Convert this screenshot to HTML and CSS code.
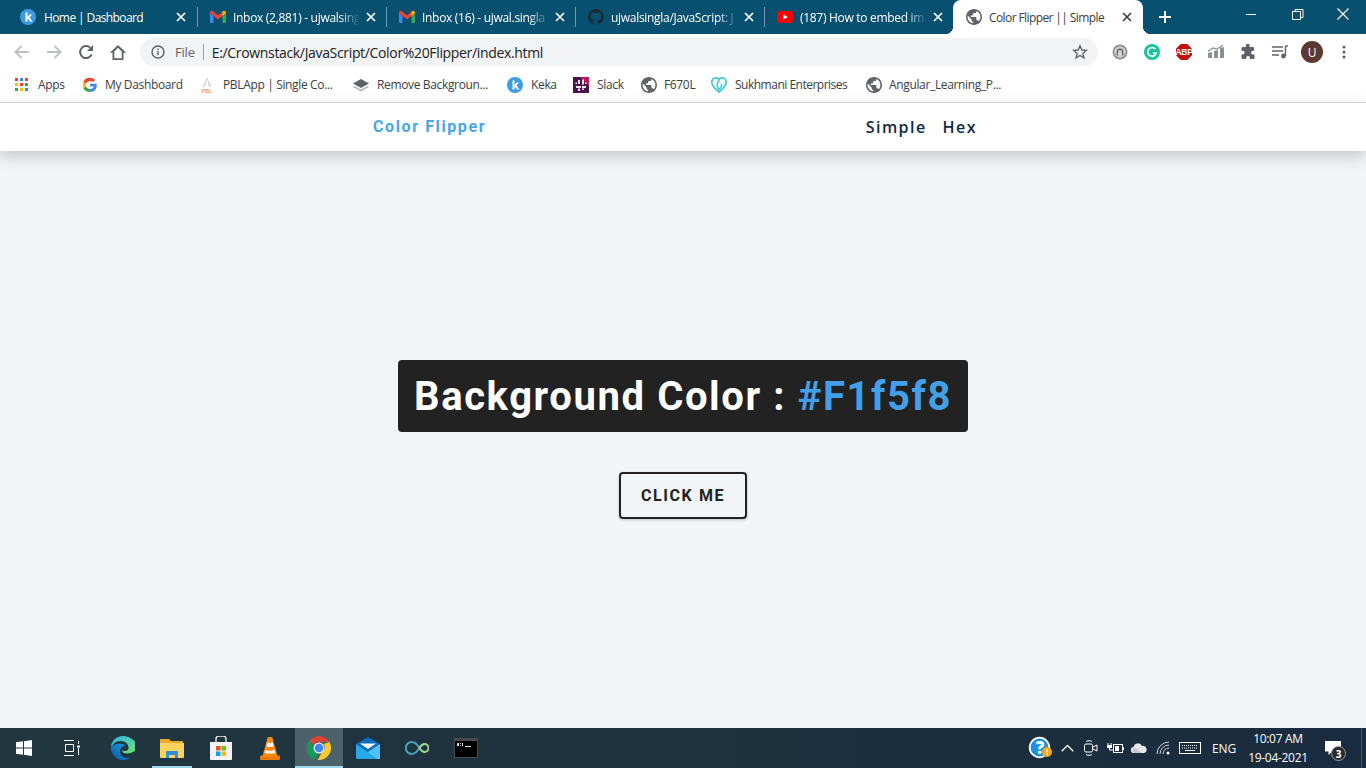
FILE: index.html
```html
<!DOCTYPE html>
<html lang="en">

<head>
    <meta charset="UTF-8">
    <meta name="viewport" content="width=device-width, initial-scale=1.0">
    <title>Color Flipper || Simple</title>
    <link rel="stylesheet" href="styles.css">
</head>

<body>
    <svg class="defs" width="0" height="0">
        <symbol id="globe" viewBox="2 2 20 20">
            <path d="M12 2C6.480 2 2 6.480 2 12s4.480 10 10 10 10-4.480 10-10S17.520 2 12 2zm-1 17.930c-3.950-.490-7-3.850-7-7.930 0-.620.080-1.210.210-1.790L9 15v1c0 1.100.9 2 2 2v1.930zm6.900-2.540c-.260-.810-1-1.390-1.900-1.390h-1v-3c0-.550-.450-1-1-1H8v-2h2c.550 0 1-.450 1-1V7h2c1.100 0 2-.9 2-2v-.410c2.930 1.190 5 4.060 5 7.410 0 2.080-.8 3.970-2.100 5.390z" fill="#5f6368" fill-rule="evenodd" />
        </symbol>
        <symbol id="gmail" viewBox="0 0 16 12">
            <path d="M0 2v9a1 1 0 0 0 1 1h2.500V5z" fill="#4285f4" />
            <path d="M12.500 5v7H15a1 1 0 0 0 1-1V2z" fill="#34a853" />
            <path d="M0 2c0-2 2-2.500 3.300-1.500L8 4.200 12.700.5C14-.5 16 0 16 2l-3.500 3L8 8.500 3.500 5z" fill="#ea4335" />
            <path d="M12.500 5 16 2c0-2-2-2.500-3.300-1.500L12.500 1z" fill="#fbbc04" />
        </symbol>
        <symbol id="keka" viewBox="0 0 16 16">
            <circle cx="8" cy="8" r="8" fill="#3d9be0" />
            <path d="M5.500 3.500h2V8l2.300-2.500h2.400L9.500 8.300l2.900 4.200H10L8.200 9.800l-.7.700v2h-2z" fill="#fff" />
        </symbol>
        <symbol id="close" viewBox="0 0 10 10">
            <path d="M1 1l8 8M9 1l-8 8" fill="none" stroke="currentColor" stroke-width="1.700" />
        </symbol>
    </svg>

    <div class="tabstrip">
        <div class="tab first">
            <svg class="favicon" width="16" height="16"><use href="#keka" /></svg>
            <span class="tab-title">Home | Dashboard</span>
            <svg class="tab-close" width="10" height="10"><use href="#close" /></svg>
        </div>
        <div class="tab">
            <svg class="favicon" width="16" height="12"><use href="#gmail" /></svg>
            <span class="tab-title fade">Inbox (2,881) - ujwalsing</span>
            <svg class="tab-close" width="10" height="10"><use href="#close" /></svg>
        </div>
        <div class="tab">
            <svg class="favicon" width="16" height="12"><use href="#gmail" /></svg>
            <span class="tab-title fade">Inbox (16) - ujwal.singla</span>
            <svg class="tab-close" width="10" height="10"><use href="#close" /></svg>
        </div>
        <div class="tab">
            <svg class="favicon" width="16" height="16" viewBox="0 0 16 16">
                <path d="M8 0a8 8 0 0 0-2.500 15.600c.4.100.5-.2.500-.4v-1.400c-2.200.5-2.700-1-2.700-1-.4-.9-.9-1.200-.9-1.200-.7-.5.100-.5.100-.5.800.1 1.200.8 1.200.8.700 1.200 1.900.9 2.300.7.100-.5.300-.9.500-1.100-1.800-.2-3.600-.9-3.600-4 0-.9.300-1.600.8-2.100-.1-.2-.4-1 .1-2.100 0 0 .7-.2 2.200.8a7.600 7.600 0 0 1 4 0c1.500-1 2.200-.8 2.200-.8.500 1.100.2 1.900.1 2.100.5.600.8 1.300.8 2.100 0 3.100-1.900 3.700-3.700 3.900.3.300.6.800.6 1.500v2.200c0 .2.100.5.600.4A8 8 0 0 0 8 0z" fill="#1b2a33" />
            </svg>
            <span class="tab-title fade">ujwalsingla/JavaScript: J</span>
            <svg class="tab-close" width="10" height="10"><use href="#close" /></svg>
        </div>
        <div class="tab">
            <svg class="favicon" width="16" height="12" viewBox="0 0 16 12">
                <rect width="16" height="12" rx="3" fill="#f00" />
                <path d="M6.400 3.400 10.800 6l-4.400 2.600z" fill="#fff" />
            </svg>
            <span class="tab-title fade">(187) How to embed im</span>
            <svg class="tab-close" width="10" height="10"><use href="#close" /></svg>
        </div>
        <div class="tab active">
            <svg class="favicon" width="16" height="16"><use href="#globe" /></svg>
            <span class="tab-title">Color Flipper || Simple</span>
            <svg class="tab-close" width="10" height="10"><use href="#close" /></svg>
        </div>
        <svg class="new-tab" width="14" height="14" viewBox="0 0 14 14">
            <path d="M7 1v12M1 7h12" fill="none" stroke="#fff" stroke-width="2" />
        </svg>
        <div class="window-controls">
            <svg width="46" height="34" viewBox="0 0 46 34"><path d="M18 14.500h10" stroke="#fff" fill="none" /></svg>
            <svg width="46" height="34" viewBox="0 0 46 34"><path d="M18.500 11.500h8v8h-8zM21 11.500V9.500h8v8h-2.500" stroke="#fff" fill="none" /></svg>
            <svg width="46" height="34" viewBox="0 0 46 34"><path d="M17.500 8.500l11 11M28.500 8.500l-11 11" stroke="#fff" fill="none" stroke-width="1.100" /></svg>
        </div>
    </div>

    <div class="toolbar">
        <div class="tool">
            <svg width="16" height="14" viewBox="0 0 16 14"><path d="M15 7H2M7.500 1 1.500 7l6 6" fill="none" stroke="#bdc1c6" stroke-width="2" /></svg>
        </div>
        <div class="tool">
            <svg width="16" height="14" viewBox="0 0 16 14"><path d="M1 7h13M8.500 1l6 6-6 6" fill="none" stroke="#bdc1c6" stroke-width="2" /></svg>
        </div>
        <div class="tool">
            <svg width="16" height="16" viewBox="0 0 16 16"><path d="M13.600 10.500A6 6 0 1 1 12.200 3.700" fill="none" stroke="#5f6368" stroke-width="2" /><path d="M15 1v6H9z" fill="#5f6368" /></svg>
        </div>
        <div class="tool">
            <svg width="18" height="17" viewBox="0 0 18 17"><path d="M9 1 .8 8.800h2.700V16h11V8.800h2.700zM5.300 14.300V7.500L9 3.800l3.700 3.700v6.800z" fill="#5f6368" fill-rule="evenodd" /></svg>
        </div>
        <div class="omnibox">
            <svg class="info" width="14" height="14" viewBox="0 0 14 14"><circle cx="7" cy="7" r="6" fill="none" stroke="#5f6368" stroke-width="1.400" /><path d="M6.300 6h1.400v4.300H6.300zM6.300 3.500h1.400v1.400H6.300z" fill="#5f6368" /></svg>
            <span class="scheme">File</span>
            <span class="omni-sep"></span>
            <span class="url">E:/Crownstack/JavaScript/Color%20Flipper/index.html</span>
            <svg class="star" width="16" height="16" viewBox="0 0 16 16"><path d="M8 1.800 9.800 6l4.500.4-3.400 3 1 4.400L8 11.500l-3.900 2.300 1-4.400-3.400-3L6.200 6z" fill="none" stroke="#5f6368" stroke-width="1.400" /></svg>
        </div>
        <div class="tool">
            <svg width="16" height="16" viewBox="0 0 16 16"><circle cx="8" cy="8" r="7.500" fill="#8e8e8e" /><circle cx="8" cy="8" r="5.800" fill="#cfcfcf" /><path d="M4.600 11.500V8a3.400 3.400 0 0 1 6.800 0v3.500H10V8a2 2 0 0 0-4 0v3.500z" fill="#6a6a6a" /></svg>
        </div>
        <div class="tool">
            <svg width="16" height="16" viewBox="0 0 16 16"><circle cx="8" cy="8" r="8" fill="#15c39a" /><path d="M11.300 5.200A4.300 4.300 0 1 0 12.200 9H8.800" fill="none" stroke="#fff" stroke-width="1.700" /></svg>
        </div>
        <div class="tool">
            <div class="abp">ABP</div>
        </div>
        <div class="tool">
            <svg width="16" height="14" viewBox="0 0 16 14"><path d="M0 8l4-1v6H0zM6 6l4-1v8H6zM12 3l4-1v11h-4z" fill="#8a8f94" /><path d="M0 6.500 5 3l4 1 6-4" fill="none" stroke="#8a8f94" stroke-width="1.200" /></svg>
        </div>
        <div class="tool">
            <svg width="16" height="16" viewBox="0 0 16 16"><path d="M6 1.500a1.800 1.800 0 0 1 3.600 0V3H13a1 1 0 0 1 1 1v2.800h-1a1.900 1.900 0 0 0 0 3.800h1.500V14a1 1 0 0 1-1 1H10v-1.200a1.900 1.900 0 0 0-3.800 0V15H2.500a1 1 0 0 1-1-1v-3.500h1.200a1.900 1.900 0 0 0 0-3.800H1.500V4a1 1 0 0 1 1-1H6z" fill="#5f6368" /></svg>
        </div>
        <div class="tool">
            <svg width="16" height="14" viewBox="0 0 16 14"><path d="M0 2h11M0 6h11M0 10h7" stroke="#5f6368" stroke-width="1.400" fill="none" /><path d="M13.500 1v10" stroke="#5f6368" stroke-width="1.400" fill="none" /><path d="M13.500 1H16" stroke="#5f6368" stroke-width="1.400" fill="none" /><circle cx="11.500" cy="11" r="2.400" fill="#5f6368" /></svg>
        </div>
        <div class="tool">
            <div class="avatar">U</div>
        </div>
        <div class="tool">
            <svg width="4" height="14" viewBox="0 0 4 14"><circle cx="2" cy="2" r="1.500" fill="#5f6368" /><circle cx="2" cy="7" r="1.500" fill="#5f6368" /><circle cx="2" cy="12" r="1.500" fill="#5f6368" /></svg>
        </div>
    </div>

    <div class="bookmarks">
        <div class="mark apps">
            <svg width="14" height="14" viewBox="0 0 14 14">
                <path d="M0 0h3v3H0z" fill="#ea4335" /><path d="M5 0h3v3H5z" fill="#4285f4" /><path d="M10 0h3v3h-3z" fill="#ea4335" />
                <path d="M0 5h3v3H0z" fill="#fbbc04" /><path d="M5 5h3v3H5z" fill="#ea4335" /><path d="M10 5h3v3h-3z" fill="#34a853" />
                <path d="M0 10h3v3H0z" fill="#34a853" /><path d="M5 10h3v3H5z" fill="#fbbc04" /><path d="M10 10h3v3h-3z" fill="#4285f4" />
            </svg>
            <span>Apps</span>
        </div>
        <div class="mark dash">
            <svg width="14" height="14" viewBox="0 0 14 14">
                <path d="M13.700 5.800H7.100v2.700h3.800c-.4 1.600-1.800 2.500-3.800 2.500V14c2.200 0 3.900-.7 5.100-2 1.200-1.300 1.700-3.200 1.500-6.200z" fill="#4285f4" />
                <path d="M3 8.300.4 10.400C1.700 12.600 4.200 14 7.100 14v-3c-1.900 0-3.500-1.200-4.100-2.700z" fill="#34a853" />
                <path d="M3 5.700.4 3.600a7 7 0 0 0 0 6.800L3 8.300a4 4 0 0 1 0-2.600z" fill="#fbbc04" />
                <path d="M7.100 3c1.100 0 2 .4 2.800 1.100l2.100-2.100A7 7 0 0 0 .4 3.600L3 5.700C3.600 4.200 5.200 3 7.100 3z" fill="#ea4335" />
            </svg>
            <span>My Dashboard</span>
        </div>
        <div class="mark pbl">
            <svg width="14" height="16" viewBox="0 0 14 16">
                <path d="M7 0 2 10h3L7 3l2 7h3z" fill="#dcdcdc" />
                <text class="pbl-mark" x="7" y="15.500">PBL</text>
            </svg>
            <span>PBLApp | Single Co...</span>
        </div>
        <div class="mark removebg">
            <svg width="16" height="14" viewBox="0 0 16 14">
                <path d="M8 1l8 4.500L8 10 0 5.500z" fill="#5f6368" />
                <path d="M1.500 8 8 11.500 14.500 8 16 9l-8 4.500L0 9z" fill="#b5b8bb" />
            </svg>
            <span>Remove Backgroun...</span>
        </div>
        <div class="mark keka">
            <svg width="16" height="16"><use href="#keka" /></svg>
            <span>Keka</span>
        </div>
        <div class="mark slack">
            <svg width="16" height="16" viewBox="0 0 16 16">
                <rect width="16" height="16" fill="#4a154b" />
                <path d="M7 0h9v9z" fill="#c2185b" />
                <path d="M5 3h2v4H5zM9 2.500h2v5H9zM3 9h5v2H3zM9 9h4v2H9zM5 11.500h2V14H5zM9 11.500h2V13H9zM2.500 5.500H4V7H2.500zM12 5.500h1.500V7H12z" fill="#f2e3ea" />
            </svg>
            <span>Slack</span>
        </div>
        <div class="mark f670">
            <svg width="16" height="16"><use href="#globe" /></svg>
            <span>F670L</span>
        </div>
        <div class="mark sukh">
            <svg width="16" height="16" viewBox="0 0 16 16">
                <path d="M8 2.500C6.500 0 2 .5 1 3.500c-1 3.200 2.500 8 7 11.500 4.500-3.500 8-8.300 7-11.500C14 .5 9.500 0 8 2.500z" fill="none" stroke="#4cc9c9" stroke-width="1.800" />
                <path d="M8 3C6 6 5.500 10 8 12.500c2-1.500 3-3.500 2.500-5.500" fill="none" stroke="#4cc9c9" stroke-width="1.600" />
            </svg>
            <span>Sukhmani Enterprises</span>
        </div>
        <div class="mark angular">
            <svg width="16" height="16"><use href="#globe" /></svg>
            <span>Angular_Learning_P...</span>
        </div>
    </div>

    <nav class="nav">
        <h4 class="logo">Color Flipper</h4>
        <ul class="nav-links">
            <li>Simple</li>
            <li>Hex</li>
        </ul>
    </nav>

    <main class="page">
        <h2 class="color-title">Background Color : <span class="color-value">#F1f5f8</span></h2>
        <button class="flip-btn">CLICK ME</button>
    </main>

    <footer class="taskbar">
        <div class="task start">
            <svg width="16" height="16" viewBox="0 0 16 16"><path d="M0 2.300 7 1.300v6.300H0zM8 1.200 16 0v7.600H8zM0 8.500h7v6.300l-7-1zM8 8.500h8V16l-8-1.200z" fill="#fff" /></svg>
        </div>
        <div class="task">
            <svg width="16" height="16" viewBox="0 0 16 16"><path d="M0 .5h10M0 15.500h10M1.500 4.500h8v7h-8zM14.500 1v3M14.500 8v7" stroke="#fff" fill="none" /><path d="M13 5.500h3v2h-3z" fill="#fff" /></svg>
        </div>
        <div class="task-apps">
            <div class="task">
                <svg width="24" height="24" viewBox="0 0 24 24">
                    <defs>
                        <linearGradient id="edgeA" x1="0" y1="1" x2="1" y2="0"><stop offset="0" stop-color="#0c59a4" /><stop offset="1" stop-color="#1b9de2" /></linearGradient>
                        <linearGradient id="edgeB" x1="0" y1="0" x2="1" y2="1"><stop offset="0" stop-color="#2fb3ec" /><stop offset="1" stop-color="#6fe36a" /></linearGradient>
                    </defs>
                    <path d="M12 0C5 0 .5 5 0 11c2-4 5.500-6 9-6 5 0 9 3 8.500 7.500-.2 1.500-1.500 2.500-3.500 2.500-2 0-3-.5-3-.5 0 2 2 3 5 3 4 0 10-2.500 10-6.500C26 5 18.500 0 12 0z" fill="url(#edgeB)" />
                    <path d="M0 11c-.3 7 5 13 12 13 3 0 5.500-1 7.500-2.500-5 1.500-10.500-1-10.500-6 0-3 2.500-5.500 5.500-6.500C10 7 1.500 7 0 11z" fill="url(#edgeA)" />
                </svg>
            </div>
            <div class="task running">
                <svg width="24" height="20" viewBox="0 0 24 20">
                    <path d="M0 1h9l2 2h12v2H0z" fill="#e8a92c" />
                    <path d="M0 5h24v14a1 1 0 0 1-1 1H1a1 1 0 0 1-1-1z" fill="#fbd35e" />
                    <path d="M6 20v-6a1 1 0 0 1 1-1h10a1 1 0 0 1 1 1v6h-3v-3H9v3z" fill="#2d8fd5" />
                </svg>
            </div>
            <div class="task">
                <svg width="24" height="24" viewBox="0 0 24 24">
                    <path d="M7 6V3a3 3 0 0 1 3-3h4a3 3 0 0 1 3 3v3" fill="none" stroke="#e6e6e6" stroke-width="1.400" />
                    <path d="M1 6h22v17a1 1 0 0 1-1 1H2a1 1 0 0 1-1-1z" fill="#f4f4f4" />
                    <path d="M7 10h4.500v4.500H7z" fill="#f25022" /><path d="M12.500 10H17v4.500h-4.500z" fill="#7fba00" />
                    <path d="M7 15.500h4.500V20H7z" fill="#00a4ef" /><path d="M12.500 15.500H17V20h-4.500z" fill="#ffb900" />
                </svg>
            </div>
            <div class="task">
                <svg width="20" height="24" viewBox="0 0 20 24">
                    <path d="M1 19.500h18a1 1 0 0 1 1 1V23a1 1 0 0 1-1 1H1a1 1 0 0 1-1-1v-2.500a1 1 0 0 1 1-1z" fill="#e8790c" />
                    <path d="M7.800 1h4.400l5.300 19c-2 1.500-13 1.500-15 0z" fill="#f58a0b" />
                    <path d="M7.300 6.500c1.500.5 4 .5 5.400 0l1 4c-2 .8-5.400.8-7.400 0zM5.300 14c2.500 1 7 1 9.400 0l.7 2.800c-3 1.200-8 1.200-11 0z" fill="#f4f4f4" />
                </svg>
            </div>
            <div class="task active">
                <svg width="24" height="24" viewBox="0 0 24 24">
                    <path d="M12 0a12 12 0 0 1 10.400 6H12a6 6 0 0 0-5.600 3.800L2.600 4.500A12 12 0 0 1 12 0z" fill="#db4437" />
                    <path d="M2.600 4.500l4.800 8.300a5 5 0 0 0 3.200 5l-3 6A12 12 0 0 1 2.600 4.500z" fill="#0f9d58" />
                    <path d="M22.400 6A12 12 0 0 1 10.600 23.900L15.800 15A5 5 0 0 0 16.800 8z" fill="#fcc934" />
                    <circle cx="12" cy="12" r="5.500" fill="#f1f3f4" />
                    <circle cx="12" cy="12" r="4.300" fill="#4285f4" />
                </svg>
            </div>
            <div class="task">
                <svg width="24" height="22" viewBox="0 0 24 22">
                    <path d="M0 7 12 0l12 7-12 8z" fill="#0f6cbd" />
                    <path d="M4 6.500h16L12 12z" fill="#f2f9fe" />
                    <path d="M0 7l12 8 12-8v14a1 1 0 0 1-1 1H1a1 1 0 0 1-1-1z" fill="#28a8ea" />
                    <path d="M24 7v14a1 1 0 0 1-1 1h-2L12 15z" fill="#50c3f2" />
                </svg>
            </div>
            <div class="task">
                <svg width="24" height="14" viewBox="0 0 24 14">
                    <path d="M14.500 7C12 3 10 1 6.800 1a6 6 0 0 0 0 12C10 13 12 11 14.500 7z" fill="none" stroke="#46a6b8" stroke-width="2" />
                    <path d="M14.500 7C16 4.500 17.500 3 19.500 3a4 4 0 0 1 0 8c-2 0-3.500-1.500-5-4z" fill="none" stroke="#a5d68f" stroke-width="2" />
                </svg>
            </div>
            <div class="task">
                <svg width="24" height="20" viewBox="0 0 24 20">
                    <rect width="24" height="20" fill="#4a4a4a" />
                    <rect x="1" y="3" width="22" height="16" fill="#000" />
                    <path d="M3 5h2v3H3zM6 5h1v1H6zM6 7h1v1H6zM8 5h1v3H8zM11 8h6v1h-6z" fill="#ddd" />
                </svg>
            </div>
        </div>

        <div class="tray">
            <div class="tray-item help">
                <svg width="24" height="24" viewBox="0 0 24 24">
                    <circle cx="11.500" cy="11.500" r="9.800" fill="#1a8fe3" stroke="#fff" stroke-width="1.800" />
                    <circle cx="19" cy="16" r="5" fill="#f5a623" />
                    <path d="M18.400 13h1.300v3.800h-1.300zM18.400 17.600h1.300v1.300h-1.300z" fill="#fff" />
                </svg>
                <span class="help-mark">?</span>
            </div>
            <div class="tray-item">
                <svg width="13" height="8" viewBox="0 0 13 8"><path d="M.7 7.300 6.500 1.500l5.800 5.800" fill="none" stroke="#fff" stroke-width="1.300" /></svg>
            </div>
            <div class="tray-item">
                <svg width="14" height="16" viewBox="0 0 14 16"><path d="M2 1.500c1-1 5-1 6 0M2 14.500c1 1 5 1 6 0" fill="none" stroke="#fff" /><rect x=".5" y="4" width="8" height="8" rx="1.500" fill="none" stroke="#fff" /><path d="M9 7l4-2v6L9 9" fill="none" stroke="#fff" /></svg>
            </div>
            <div class="tray-item">
                <svg width="17" height="11" viewBox="0 0 17 11"><path d="M1 0v2M4 0v2" stroke="#fff" fill="none" /><path d="M0 2h5v3H0z" fill="#fff" /><path d="M2.500 5v2H6" stroke="#fff" fill="none" /><rect x="6.500" y="1.500" width="9" height="8" fill="none" stroke="#fff" /><path d="M8 3h4v5H8z" fill="#fff" /><path d="M16 4h1v3h-1z" fill="#fff" /></svg>
            </div>
            <div class="tray-item">
                <svg width="16" height="10" viewBox="0 0 16 10"><path d="M3 10a3 3 0 0 1-.5-6A4.500 4.500 0 0 1 11 3a3.500 3.500 0 0 1 2 7z" fill="#e8e8e8" /><path d="M3 10a3 3 0 0 1 0-5c2 0 5 3 8 5z" fill="#c4c8cc" /></svg>
            </div>
            <div class="tray-item">
                <svg width="15" height="14" viewBox="0 0 15 14"><path d="M1 13A12 12 0 0 1 13 1M4 13A9 9 0 0 1 13 4M7 13a6 6 0 0 1 6-6" fill="none" stroke="#cfd3d6" /><circle cx="12" cy="12" r="1.500" fill="#fff" /></svg>
            </div>
            <div class="tray-item keyboard">
                <svg width="22" height="12" viewBox="0 0 22 12"><rect x=".5" y=".5" width="21" height="11" fill="none" stroke="#fff" /><path d="M3 3.500h16M3 6h16" stroke="#fff" stroke-dasharray="1 1" fill="none" /><path d="M6 8.500h10" stroke="#fff" fill="none" /></svg>
            </div>
            <div class="tray-item lang">ENG</div>
            <div class="tray-item clock">
                <span>10:07 AM</span>
                <span>19-04-2021</span>
            </div>
            <div class="tray-item notify">
                <svg width="16" height="15" viewBox="0 0 16 15"><path d="M0 0h16v10.500H7L3.500 14v-3.500H0z" fill="#fff" /></svg>
                <span class="badge">3</span>
            </div>
            <div class="show-desktop"></div>
        </div>
    </footer>
</body>

</html>
```

FILE: styles.css
```css
* {
    box-sizing: border-box;
}

body {
    font-family: "Open Sans", sans-serif;
    margin: 0;
    width: 1366px;
    height: 768px;
    overflow: hidden;
    display: flex;
    flex-direction: column;
    background-color: #f1f5f8;
}

.defs {
    display: none;
}

/* browser tabs */
.tabstrip {
    height: 34px;
    flex: none;
    display: flex;
    align-items: stretch;
    padding-left: 9px;
    background-color: #07506f;
}

.tab {
    position: relative;
    width: 189px;
    display: flex;
    align-items: center;
    padding-left: 12px;
    color: #fff;
    font-size: 12px;
    letter-spacing: -0.6px;
}

.tab::after {
    content: "";
    position: absolute;
    right: 0;
    top: 7px;
    height: 20px;
    width: 1px;
    background-color: #6f97a9;
}

.tab.first {
    padding-left: 11px;
}

.tab.first .tab-title {
    width: 126px;
    margin-left: 8px;
}

.tab.active {
    width: 190px;
    margin-left: -1px;
    padding-left: 13px;
    background-color: #fff;
    color: #3c4043;
    border-radius: 8px 8px 0 0;
}

.tab.active::after {
    display: none;
}

.tab.active::before {
    content: "";
    position: absolute;
    left: -8px;
    right: -8px;
    bottom: 0;
    height: 8px;
    background:
        radial-gradient(circle at 0 0, #07506f 8px, #fff 8.5px) left / 8px 8px no-repeat,
        radial-gradient(circle at 100% 0, #07506f 8px, #fff 8.5px) right / 8px 8px no-repeat;
}

.favicon {
    flex: none;
}

.tab-title {
    width: 127px;
    margin-left: 7px;
    flex: none;
    white-space: nowrap;
}

.tab-title.fade {
    letter-spacing: -0.3px;
    -webkit-mask-image: linear-gradient(to right, #000 84%, transparent 100%);
    mask-image: linear-gradient(to right, #000 84%, transparent 100%);
}

.tab-close {
    flex: none;
    margin-left: 6px;
    color: #fff;
}

.tab.active .tab-close {
    color: #3c4043;
}

.new-tab {
    align-self: center;
    margin-left: 15px;
}

.window-controls {
    margin-left: auto;
    display: flex;
}

.window-controls svg {
    display: block;
}

/* address bar */
.toolbar {
    height: 36px;
    flex: none;
    display: flex;
    align-items: center;
    padding: 0 6px;
    background-color: #fff;
}

.tool {
    width: 32px;
    height: 32px;
    flex: none;
    display: flex;
    align-items: center;
    justify-content: center;
}

.omnibox {
    flex: 1;
    height: 28px;
    margin: 0 6px;
    display: flex;
    align-items: center;
    padding-left: 11px;
    border-radius: 14px;
    background-color: #f1f3f4;
    font-size: 14px;
    letter-spacing: -0.34px;
    color: #202124;
}

.scheme {
    margin-left: 10px;
    font-size: 13px;
    letter-spacing: -0.2px;
    color: #5f6368;
}

.omni-sep {
    width: 1px;
    height: 16px;
    margin: 0 8px;
    background-color: #9aa0a6;
}

.star {
    margin-left: auto;
    margin-right: 10px;
}

.abp {
    width: 16px;
    height: 16px;
    display: flex;
    align-items: center;
    justify-content: center;
    clip-path: polygon(30% 0, 70% 0, 100% 30%, 100% 70%, 70% 100%, 30% 100%, 0 70%, 0 30%);
    background-color: #c70d0d;
    color: #fff;
    font-family: "Liberation Sans", sans-serif;
    font-size: 8.5px;
    font-weight: bold;
    letter-spacing: -0.3px;
}

.avatar {
    width: 22px;
    height: 22px;
    display: flex;
    align-items: center;
    justify-content: center;
    border-radius: 50%;
    background-color: #5b3a31;
    color: #fff;
    font-size: 12px;
}

/* bookmarks */
.bookmarks {
    height: 33px;
    flex: none;
    display: flex;
    align-items: center;
    padding: 0 0 3px 15px;
    border-bottom: 1px solid #d9dadc;
    background-color: #fff;
    font-size: 12px;
    letter-spacing: -0.35px;
    color: #3c4043;
}

.mark {
    flex: none;
    display: flex;
    align-items: center;
    gap: 8px;
    white-space: nowrap;
}

.mark.apps { width: 68px; gap: 9px; }
.mark.dash { width: 117px; }
.mark.pbl { width: 153px; gap: 9px; }
.mark.removebg { width: 154px; }
.mark.keka { width: 66px; }
.mark.slack { width: 68px; }
.mark.f670 { width: 70px; gap: 7px; }
.mark.sukh { width: 155px; letter-spacing: -0.5px; }
.mark.angular { gap: 7px; }

.pbl-mark {
    font-family: "Liberation Sans", sans-serif;
    font-size: 5.5px;
    font-weight: bold;
    letter-spacing: 0;
    text-anchor: middle;
    fill: #f0a05a;
}

/* page nav */
.nav {
    position: relative;
    height: 48px;
    flex: none;
    display: flex;
    align-items: center;
    justify-content: space-between;
    padding: 0 389px 0 373px;
    background-color: #fff;
    box-shadow: 0 5px 15px rgba(0, 0, 0, 0.2);
}

.logo {
    margin: 0 0 2px;
    font-family: Roboto, sans-serif;
    font-size: 16px;
    font-weight: 700;
    letter-spacing: 1.6px;
    color: #49a6e9;
}

.nav-links {
    list-style: none;
    margin: 0;
    padding: 0;
    display: flex;
    gap: 16px;
    font-size: 16px;
    font-weight: 600;
    letter-spacing: 1.45px;
    color: #102a42;
}

/* main content */
.page {
    flex: 1;
    display: flex;
    flex-direction: column;
    align-items: center;
    justify-content: center;
    gap: 40px;
}

.color-title {
    margin: 0;
    padding: 13px 16px 11px;
    border-radius: 4px;
    background-color: #222;
    color: #fff;
    font-family: Roboto, sans-serif;
    font-size: 40px;
    line-height: 48px;
    font-weight: 700;
    letter-spacing: 1.6px;
}

.color-value {
    color: #43a0e8;
}

.flip-btn {
    width: 128px;
    height: 47px;
    padding: 0;
    border: 2px solid #222;
    border-radius: 4px;
    background-color: transparent;
    box-shadow: 0 1px 3px rgba(0, 0, 0, 0.2);
    color: #222;
    font-family: Roboto, sans-serif;
    font-size: 16px;
    font-weight: 700;
    letter-spacing: 1.6px;
}

/* windows taskbar */
.taskbar {
    height: 40px;
    flex: none;
    display: flex;
    align-items: stretch;
    background: linear-gradient(to right, #21373f, #192b3e);
    color: #fff;
}

.task {
    width: 48px;
    display: flex;
    align-items: center;
    justify-content: center;
    position: relative;
}

.task.running::after,
.task.active::after {
    content: "";
    position: absolute;
    left: 4px;
    right: 4px;
    bottom: 0;
    height: 2px;
    background-color: #9fd7ef;
}

.task.active {
    background-color: #4c626b;
}

.task.active::after {
    left: 0;
    right: 0;
}

.task-apps {
    display: flex;
    gap: 1px;
    margin-left: 3px;
}

.tray {
    margin-left: auto;
    display: flex;
    align-items: stretch;
}

.tray-item {
    width: 24px;
    display: flex;
    align-items: center;
    justify-content: center;
    position: relative;
}

.help {
    margin-right: 3px;
}

.help-mark {
    position: absolute;
    left: 1px;
    top: 10px;
    width: 22px;
    text-align: center;
    font-size: 17px;
    line-height: 20px;
    font-weight: 800;
    color: #fff;
}

.keyboard {
    width: 30px;
}

.lang {
    width: 38px;
    font-size: 12px;
    letter-spacing: -0.2px;
}

.clock {
    width: 70px;
    flex-direction: column;
    font-size: 12px;
    letter-spacing: -0.3px;
}

.clock span {
    line-height: 19px;
}

.notify {
    width: 40px;
}

.badge {
    position: absolute;
    right: 7px;
    bottom: 7px;
    width: 15px;
    height: 15px;
    display: flex;
    align-items: center;
    justify-content: center;
    border: 1px solid #9a9a9a;
    border-radius: 50%;
    background-color: #2b2b2b;
    font-size: 10px;
    font-weight: 700;
}

.show-desktop {
    width: 13px;
    background: linear-gradient(#4b5a66, #4b5a66) 8px 0 / 1px 100% no-repeat;
}
```
